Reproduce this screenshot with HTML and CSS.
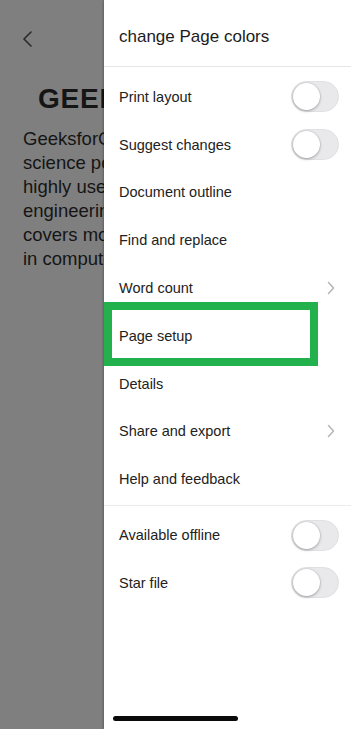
FILE: index.html
```html
<!DOCTYPE html>
<html lang="en">
<head>
  <meta charset="UTF-8" />
  <meta name="viewport" content="width=device-width, initial-scale=1.0" />
  <title>Docs menu</title>
  <link rel="stylesheet" href="styles.css">
</head>
<body>
  <div class="screen">
    <div class="backdrop">
      <div class="doc">
        <div class="back">
          <svg width="12" height="16" viewBox="0 0 12 16"><path d="M9 1 L2 8 L9 15" fill="none" stroke="#2a2a2a" stroke-width="1.6" stroke-linecap="round" stroke-linejoin="round"/></svg>
        </div>
        <h1>GEEKSFORGEEKS</h1>
        <p>GeeksforGeeks is a computer<br>science portal which is<br>highly used by students of<br>engineering. GeeksforGeeks<br>covers most of the subjects<br>in computer science.</p>
      </div>
    </div>

    <div class="drawer">
      <div class="drawer-title">change Page colors</div>
      <div class="group first">
        <div class="row">Print layout <span class="toggle"></span></div>
        <div class="row">Suggest changes <span class="toggle"></span></div>
        <div class="row">Document outline</div>
        <div class="row">Find and replace</div>
        <div class="row">Word count <span class="chev"><svg width="8" height="14" viewBox="0 0 8 14"><path d="M1.5 1.5 L6.5 7 L1.5 12.5" fill="none" stroke="#b5b5b8" stroke-width="1.5" stroke-linecap="round" stroke-linejoin="round"/></svg></span></div>
        <div class="row">Page setup</div>
        <div class="row">Details</div>
        <div class="row">Share and export <span class="chev"><svg width="8" height="14" viewBox="0 0 8 14"><path d="M1.5 1.5 L6.5 7 L1.5 12.5" fill="none" stroke="#b5b5b8" stroke-width="1.5" stroke-linecap="round" stroke-linejoin="round"/></svg></span></div>
        <div class="row">Help and feedback</div>
      </div>
      <div class="group second">
        <div class="row">Available offline <span class="toggle"></span></div>
        <div class="row">Star file <span class="toggle"></span></div>
      </div>
      <div class="highlight"></div>
    </div>

    <div class="home-bar"></div>
  </div>
</body>
</html>
```

FILE: styles.css
```css
body {
  margin: 0;
  font-family: "Liberation Sans", Arial, sans-serif;
  background: #fff;
}
.screen {
  position: relative;
  display: flex;
  width: 351px;
  height: 729px;
  overflow: hidden;
}
.backdrop {
  width: 104px;
  flex-shrink: 0;
  overflow: hidden;
  background: #7f7f7f;
}
.doc {
  width: 380px;
  color: #151515;
}
.back {
  padding: 31px 0 0 22px;
  height: 16px;
}
.doc h1 {
  margin: 36px 0 0 38px;
  font-size: 28px;
  line-height: 32px;
  font-weight: 700;
  letter-spacing: 0.8px;
}
.doc p {
  margin: 12px 0 0 23px;
  font-size: 18.5px;
  line-height: 24px;
  white-space: nowrap;
}
.drawer {
  position: relative;
  flex: 1;
  background: #fff;
  box-shadow: -1px 0 2px rgba(0,0,0,0.25);
}
.drawer-title {
  height: 67px;
  line-height: 74px;
  box-sizing: border-box;
  padding-left: 15px;
  font-size: 17px;
  color: #1c1c1c;
  border-bottom: 1px solid #e6e6e6;
}
.group.first {
  padding: 6px 0 2px;
  border-bottom: 1px solid #ececec;
}
.group.second {
  padding-top: 5px;
}
.row {
  display: flex;
  align-items: center;
  justify-content: space-between;
  height: 47.8px;
  padding: 0 12px 0 15px;
  font-size: 14.5px;
  color: #222;
}
.toggle {
  position: relative;
  width: 48px;
  height: 31px;
  box-sizing: border-box;
  border-radius: 16px;
  background: #e9e9eb;
  border: 1px solid #e0e0e2;
}
.toggle::after {
  content: "";
  position: absolute;
  left: 1px;
  top: 1px;
  width: 27px;
  height: 27px;
  border-radius: 50%;
  background: #fff;
  box-shadow: 0 1px 3px rgba(0,0,0,0.3), 0 0 0 0.5px rgba(0,0,0,0.08);
}
.chev {
  display: flex;
  margin-right: 4px;
}
.highlight {
  position: absolute;
  left: 0;
  top: 302px;
  width: 214px;
  height: 64px;
  box-sizing: border-box;
  border: 8px solid #22b14c;
}
.home-bar {
  position: absolute;
  left: 113px;
  bottom: 8px;
  width: 125px;
  height: 5px;
  border-radius: 3px;
  background: #0a0a0a;
}
```
